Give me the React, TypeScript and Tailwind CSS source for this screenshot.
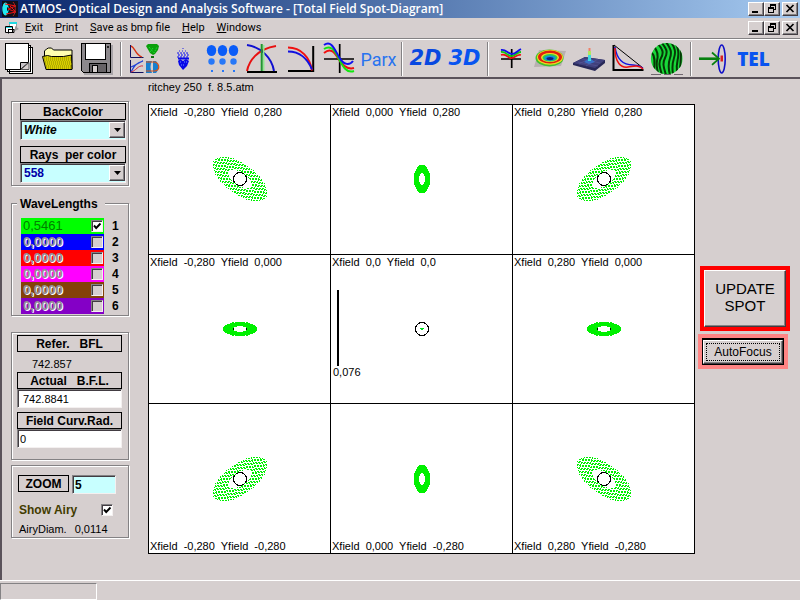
import React from 'react';

const sunken =
  'border border-t-[#848284] border-l-[#848284] border-r-[#f4f0f0] border-b-[#f4f0f0] shadow-[inset_1px_1px_0_#423c42]';
const raised =
  'bg-[#d6cfcf] border border-t-white border-l-white border-r-[#423c42] border-b-[#423c42] shadow-[inset_-1px_-1px_0_#848284]';
const panel = 'border border-[#848284] shadow-[1px_1px_0_#fff,inset_1px_1px_0_#fff]';
const caption =
  'flex items-center justify-center h-[17px] border border-black text-[12px] leading-[14px] font-bold whitespace-pre';

/* ---------- window chrome ---------- */

const WindowButtons: React.FC<{ target: string }> = ({ target }) => (
  <div className="flex">
    <button type="button" aria-label={`Minimize ${target}`} className={`w-4 h-[14px] ${raised}`}>
      <svg viewBox="0 0 14 12" className="w-[14px] h-3" shapeRendering="crispEdges">
        <path d="M3 8h6v2h-6z" />
      </svg>
    </button>
    <button type="button" aria-label={`Restore ${target}`} className={`w-4 h-[14px] ${raised}`}>
      <svg viewBox="0 0 14 12" className="w-[14px] h-3" shapeRendering="crispEdges">
        <path d="M5 1h6v2h-6zM5 3h1v2h-1zM10 3h1v4h-1zM9 6h1v1h-1zM3 4h6v2h-6zM3 6h1v4h-1zM8 6h1v4h-1zM3 9h6v1h-6z" />
      </svg>
    </button>
    <button type="button" aria-label={`Close ${target}`} className={`w-4 h-[14px] ml-[2px] ${raised}`}>
      <svg viewBox="0 0 14 12" className="w-[14px] h-3">
        <path d="M3.5 2l7 7M10.5 2l-7 7" stroke="#000" strokeWidth="1.7" />
      </svg>
    </button>
  </div>
);

const TitleBar = () => (
  <header className="flex items-center h-[18px] pl-[2px] pr-[2px] bg-linear-to-r from-[#0a246a] to-[#a6caf0]">
    <svg viewBox="0 0 16 16" className="w-4 h-4 bg-[#101018]">
      <ellipse cx="3.5" cy="8" rx="3.2" ry="6.5" fill="#20e8f0" />
      <path d="M5 6l3 2-3 2z" fill="#101018" />
      <path d="M3 3l11 2-8 3 8 3-10 2M8 5l6 6" fill="none" stroke="#f01010" />
      <path d="M11 1c3 3 3 11 0 14" fill="none" stroke="#b02020" />
    </svg>
    <h1 className="flex-1 pl-[2px] font-['Open_Sans'] text-[12px] leading-[18px] font-semibold text-white whitespace-nowrap">
      ATMOS- Optical Design and Analysis Software - [Total Field Spot-Diagram]
    </h1>
    <WindowButtons target="application" />
  </header>
);

const MenuBar = () => (
  <nav className="flex items-center h-[21px] pl-[5px] pr-[2px] border-b border-[#848284]">
    <svg viewBox="0 0 15 14" className="w-[15px] h-[14px] mr-[5px]">
      <path d="M4.5 1.5h7v7h-7z" fill="#fff" stroke="#9a9a9a" />
      <path d="M4 1h8v2h-8z" fill="#20d8e0" />
      <path d="M10 5l4 3-4 2z" fill="#9a9a9a" />
      <path d="M.5 5.500h7v6h-7z" fill="#fff" stroke="#000" />
      <path d="M1 6h6v1h-6z" fill="#20d8e0" />
      <path d="M3.5 8v4.500M3 8.500h6v3h-5" fill="none" stroke="#000" />
    </svg>
    <ul className="flex flex-1 gap-3 font-['Roboto'] text-[11px] leading-[18px]">
      <li><button type="button"><u>E</u>xit</button></li>
      <li><button type="button"><u>P</u>rint</button></li>
      <li><button type="button"><u>S</u>ave as bmp file</button></li>
      <li><button type="button"><u>H</u>elp</button></li>
      <li><button type="button"><u>W</u>indows</button></li>
    </ul>
    <WindowButtons target="document" />
  </nav>
);

/* ---------- toolbar ---------- */

const Tool: React.FC<{ label: string; children: React.ReactNode }> = ({ label, children }) => (
  <button type="button" aria-label={label} className="w-[39px] h-9 shrink-0">
    <svg viewBox="0 0 39 36" className="w-[39px] h-9" fill="none">
      {children}
    </svg>
  </button>
);

const TextTool: React.FC<{ className: string; children: React.ReactNode }> = ({ className, children }) => (
  <button type="button" className={`flex items-center justify-center w-[39px] h-9 shrink-0 ${className}`}>
    {children}
  </button>
);

const Separator = () => (
  <div className="w-2 shrink-0 flex justify-center">
    <div className="w-[2px] h-[34px] bg-[#848284] border-r border-white" />
  </div>
);

const Toolbar = () => (
  <div className="flex items-center h-10 pt-px border-t border-t-white border-b-2 border-b-[#5a525a]">
    <Tool label="New">
      <g fill="#fff" stroke="#000" shapeRendering="crispEdges">
        <path d="M9.5 6.500h23v26h-23zM7.5 4.500h23v26h-23z" />
        <path d="M5.5 2.500h23v26h-23z" />
      </g>
      <path d="M20.5 28.500v-7h8z" fill="#c8c4c8" stroke="#000" />
      <path d="M21 28.500l8-7v7z" fill="#d6cfcf" stroke="#555" />
    </Tool>
    <Tool label="Open">
      <path d="M5.5 16v-6l2-2 2-1h3l2 2h18.500v19z" fill="#ffffb0" stroke="#000" />
      <path d="M3.5 15.500l5-1 4 1h12l8-1.500.5 14.500h-26z" fill="#d8d000" stroke="#000" />
      <path d="M5 17h27M5 19h27M6 21h26M6 23h27M7 25h26M7 27h26" stroke="#8c8800" strokeDasharray="1 1" />
    </Tool>
    <Tool label="Save">
      <g shapeRendering="crispEdges">
        <path d="M5 4h30v30h-29z" fill="#a8a4a8" />
        <path d="M3.5 2.500h29v29h-27l-2-2z" fill="#8c888c" stroke="#000" />
        <path d="M7.5 2.500h20v16h-20z" fill="#fff" stroke="#000" />
        <path d="M11.5 22.500h17v9h-17z" fill="#666266" stroke="#000" />
        <path d="M14 24h5v7h-5z" fill="#d6cfcf" stroke="#000" />
        <path d="M29 5h2v2h-2z" fill="#222" />
      </g>
    </Tool>
    <Separator />
    <Tool label="Analysis summary">
      <path d="M5.5 4v12.500h13M5.5 19v12.500h13" stroke="#101060" />
      <path d="M6 5c4 1 4 9 11 11" stroke="#d83010" strokeWidth="1.3" />
      <path d="M23 3h9l2 2-1 4-3 4-2 1-3-2-4-7z" fill="#0aa00a" />
      <path d="M24 6l5 6 3-6M25 11l3-4" stroke="#20e840" strokeDasharray="1 1" />
      <path d="M26 16h3" stroke="#107010" strokeWidth="2" />
      <path d="M6 31c3-6 5-9 12-11M6 26c5-2 7-4 12-6" stroke="#2040d8" strokeWidth="1.2" />
      <path d="M6 31c5-1 7-7 12-6" stroke="#d03040" />
      <path d="M21 20h6c-2 4-2 8 0 12h-6zM28 20h3c3 3 3 9 0 12h-3z" fill="#1880d0" />
      <path d="M21 21h9c5 2 5 8 0 9h-9" stroke="#e05010" strokeWidth="1.2" />
    </Tool>
    <Tool label="Spot diagram">
      <path d="M14 20l2-2 3 2 3-2 3 2-2 5-4 4-4-5z" fill="#0808e8" />
      <path d="M19 7v2M15 10h9" stroke="#2020e8" strokeDasharray="1 2" />
      <path d="M13 12h12M14 14h11M13 16h12" stroke="#1818e8" strokeDasharray="2 1" />
      <path d="M14 13h11M14 15h11" stroke="#4848f0" strokeDasharray="1 2" />
      <path d="M14 17.500h11" stroke="#0808e8" strokeWidth="2" />
      <path d="M16 21h2m2 0h3M17 24h4" stroke="#6c90ff" strokeDasharray="1 1" />
    </Tool>
    <Tool label="Total field spot diagram">
      <g fill="#0a5cf8">
        <ellipse cx="8.5" cy="9.5" rx="4.7" ry="5.5" />
        <ellipse cx="19.5" cy="9.5" rx="4.7" ry="5.5" />
        <ellipse cx="30.5" cy="9.5" rx="4.7" ry="5.5" />
      </g>
      <g fill="#2878f8">
        <circle cx="8.5" cy="20.5" r="3.2" />
        <circle cx="19.5" cy="20.5" r="3.2" />
        <circle cx="30.5" cy="20.5" r="3.2" />
        <path d="M8 29h2v2h-2zM19 29h2v2h-2zM30 29h2v2h-2z" />
      </g>
    </Tool>
    <Tool label="Field curves">
      <path d="M5 31h30" stroke="#000" strokeWidth="2" />
      <path d="M5 30c2-10 10-22 29-25" stroke="#e81010" strokeWidth="2" />
      <path d="M5 4c14 2 25 13 27 26" stroke="#1010d0" strokeWidth="2" />
      <path d="M21.7 4v26" stroke="#90e890" strokeWidth="1.5" />
      <path d="M19.7 3v27" stroke="#209830" strokeWidth="2" />
    </Tool>
    <Tool label="Distortion">
      <path d="M7 30h25.500M32.2 5v26" stroke="#000" strokeWidth="2" />
      <path d="M7 6.500c13 0 22 10 24 23" stroke="#f01010" strokeWidth="2" />
      <path d="M7 10.500c12 0 20 8 24 18" stroke="#1010e0" strokeWidth="2" />
    </Tool>
    <Tool label="Ray fans">
      <path d="M19.7 3v29M4 18h30" stroke="#000" strokeWidth="1.7" />
      <path d="M4 12c6-5 10-2 14 5s9 12 16 10" stroke="#f01010" strokeWidth="2" />
      <path d="M4 8c6-4 10 0 14 8s8 17 16 14" stroke="#10e810" strokeWidth="2" />
      <path d="M4 4c7-5 10 3 15 12s11 8 14 4" stroke="#1010f0" strokeWidth="2" />
    </Tool>
    <TextTool className="font-['Roboto'] text-[18px] text-[#2874f0]">Parx</TextTool>
    <Separator />
    <TextTool className="font-['DejaVu_Sans'] text-[21px] font-bold italic text-[#0848e0]">2D</TextTool>
    <TextTool className="font-['DejaVu_Sans'] text-[21px] font-bold italic text-[#0854f0]">3D</TextTool>
    <Separator />
    <Tool label="Wavefront section">
      <path d="M19.7 8v19M9 18h20" stroke="#000" strokeWidth="1.7" />
      <path d="M9 14c6-2 7 4 11 3s5-4 9-3" stroke="#f01010" strokeWidth="1.8" />
      <path d="M9 11c5-1 7 5 11 4s5-4 9-4" stroke="#10c810" strokeWidth="1.8" />
      <path d="M9 9c5-1 7 4 11 4s5-3 9-5" stroke="#1010e8" strokeWidth="1.8" />
    </Tool>
    <Tool label="Wavefront map">
      <path d="M8 9l27 1-5 15-27 1z" fill="#b8b0b0" />
      <ellipse cx="18.5" cy="17" rx="14" ry="8.5" fill="#40c030" />
      <ellipse cx="19" cy="16.3" rx="13" ry="7.5" fill="#f0d820" />
      <ellipse cx="19" cy="16" rx="12" ry="6.5" fill="#e02010" />
      <ellipse cx="19" cy="16.5" rx="9" ry="4.6" fill="#f0e020" />
      <ellipse cx="19" cy="16.8" rx="7.5" ry="3.8" fill="#30c850" />
      <ellipse cx="19" cy="17.2" rx="5.5" ry="2.6" fill="#1090e0" />
      <ellipse cx="19" cy="17.6" rx="3.5" ry="1.6" fill="#102080" />
    </Tool>
    <Tool label="Point spread function">
      <path d="M3 22l12-6 20 3v3l-10 8-22-6z" fill="#282858" />
      <path d="M3 22l12-6 20 3-10 8z" fill="#40407c" />
      <path d="M8 21l20 4M12 18l18 4M9 23l11-6M16 25l12-7" stroke="#585898" strokeWidth=".6" />
      <path d="M14 21l4-3h3l4 3-6 2z" fill="#3870c8" />
      <path d="M18 12h3v8h-3z" fill="#40d8e0" />
      <path d="M18 10h3v4h-3z" fill="#b0e860" />
      <path d="M18.5 7h2v3h-2z" fill="#f08068" />
    </Tool>
    <Tool label="MTF">
      <path d="M4.5 4v25h30" stroke="#000" strokeWidth="2" />
      <path d="M5 4l29 23" stroke="#000" />
      <path d="M6 6c2 14 9 18 18 18 4 0 7 1 10 3" stroke="#1010e0" strokeWidth="1.5" />
      <path d="M6 7c0 15 6 20 13 19 7-1 12-2 15 2" stroke="#f01010" strokeWidth="1.5" />
    </Tool>
    <Tool label="Interferogram">
      <clipPath id="fringes">
        <circle cx="18.7" cy="17.7" r="15.8" />
      </clipPath>
      <g clipPath="url(#fringes)">
        <path d="M0 0h39v36h-39z" fill="#18d838" />
        <g stroke="#063806" strokeWidth="2">
          <path d="M4 12c3 3 3 8 2 18" />
          <path d="M6 6c5 5 4 10 3 14s0 8 1 12" />
          <path d="M9 2c6 6 7 10 4 15s-1 10 1 17" />
          <path d="M13 1c6 7 7 10 4 16s-1 10 1 17" />
          <path d="M18 1c5 7 6 10 4 16s-2 10 0 17" />
          <path d="M23 1c4 6 5 10 3 16s-2 10-1 16" />
          <path d="M28 3c3 6 3 9 2 14s-2 8-1 14" />
          <path d="M33 7c0 8 0 14-1 20" />
        </g>
      </g>
      <path d="M3 33.500h10M16 33.500h7M26 33.500h9" stroke="#706870" />
    </Tool>
    <Separator />
    <Tool label="Image simulation">
      <ellipse cx="26.7" cy="18" rx="3.5" ry="14" stroke="#1010c8" strokeWidth="1.6" />
      <path d="M4 17.700h19" stroke="#088010" strokeWidth="2.6" />
      <path d="M17 11.500l7 6.200-7 6.200" stroke="#088010" strokeWidth="1.8" />
      <path d="M25.5 14.500h2.500v6h-2.500z" fill="#d82020" />
    </Tool>
    <TextTool className="font-['Open_Sans'] text-[19px] font-extrabold text-[#0854f0]">TEL</TextTool>
  </div>
);

/* ---------- settings column ---------- */

const Combo: React.FC<{ id: string; options: string[]; className: string }> = ({ id, options, className }) => (
  <div className={`relative h-5 bg-[#c8ffff] ${sunken}`}>
    <select
      id={id}
      className={`block appearance-none w-full h-[18px] pl-[3px] outline-none text-[12px] leading-[14px] font-bold ${className}`}
    >
      {options.map((o) => (
        <option key={o}>{o}</option>
      ))}
    </select>
    <span className={`absolute right-0 top-px w-4 h-4 flex items-center justify-center pointer-events-none ${raised}`}>
      <svg viewBox="0 0 7 4" className="w-[7px] h-1">
        <path d="M0 0h7L3.5 4z" />
      </svg>
    </span>
  </div>
);

const Check: React.FC<{ id?: string; label?: string; checked?: boolean }> = ({ id, label, checked = false }) => (
  <span className="relative w-3 h-3 shrink-0">
    <input
      type="checkbox"
      id={id}
      aria-label={label}
      defaultChecked={checked}
      className={`peer block appearance-none w-3 h-3 bg-[#d6cfcf] checked:bg-white ${sunken}`}
    />
    <svg viewBox="0 0 12 12" className="hidden peer-checked:block absolute inset-0 w-3 h-3 pointer-events-none">
      <path d="M3 5.500l2.200 2.500 4.300-4.500" fill="none" stroke="#000" strokeWidth="1.9" />
    </svg>
  </span>
);

const waves = [
  { value: '0,5461', color: 'bg-[#00ff00]', on: true },
  { value: '0,0000', color: 'bg-[#0000ff]', on: false },
  { value: '0,0000', color: 'bg-[#ff0000]', on: false },
  { value: '0,0000', color: 'bg-[#ff00ff]', on: false },
  { value: '0,0000', color: 'bg-[#844108]', on: false },
  { value: '0,0000', color: 'bg-[#8400c6]', on: false },
];

const Settings = () => (
  <form className="w-[118px] shrink-0 flex flex-col pt-[22px]">
    <div className={`pl-2 pr-[2px] pt-px pb-[2px] ${panel}`}>
      <label htmlFor="back" className={caption}>BackColor</label>
      <Combo id="back" options={['White', 'Black']} className="italic text-black" />
      <label htmlFor="rays" className={`mt-[6px] ${caption}`}>Rays  per color</label>
      <Combo id="rays" options={['558', '1200']} className="text-[#0000a8]" />
    </div>

    <div className={`mt-[17px] pl-[9px] pr-[9px] pb-px ${panel}`}>
      <h2 className="relative -top-2 -ml-1 w-[88px] h-[14px] pl-[3px] bg-[#d6cfcf] text-[12px] leading-[16px] font-bold">
        WaveLengths
      </h2>
      {waves.map((w, i) => (
        <div key={i} className="flex items-center h-4">
          <div className={`flex items-center w-[83px] h-4 pl-[2px] pr-px ${w.color}`}>
            <input
              type="text"
              aria-label={`Wavelength ${i + 1}`}
              defaultValue={w.value}
              className={`w-[68px] h-4 outline-none text-[13px] ${w.on ? 'text-[#008000]' : 'font-bold text-[#948c94] [text-shadow:1px_1px_0_#fff]'}`}
            />
            <Check label={`Use wavelength ${i + 1}`} checked={w.on} />
          </div>
          <span className="pl-2 text-[12px] font-bold">{i + 1}</span>
        </div>
      ))}
    </div>

    <div className={`mt-4 pl-[5px] pr-[6px] pt-[2px] pb-[11px] ${panel}`}>
      <div className={caption}>Refer.   BFL</div>
      <p className="h-5 pt-[5px] pl-[15px] text-[11px] leading-[14px]">742.857</p>
      <label htmlFor="bfl" className={caption}>Actual   B.F.L.</label>
      <input id="bfl" type="text" defaultValue="742.8841" className={`block w-full h-[19px] pl-[5px] bg-white text-[11px] outline-none ${sunken}`} />
      <label htmlFor="curv" className={`mt-[4px] ${caption}`}>Field Curv.Rad.</label>
      <input id="curv" type="text" defaultValue="0" className={`block w-full h-[19px] pl-[2px] bg-white text-[11px] outline-none ${sunken}`} />
    </div>

    <div className={`mt-[5px] pl-[6px] pr-3 pt-[9px] pb-px ${panel}`}>
      <div className="flex items-start gap-[3px]">
        <label htmlFor="zoom" className={`w-[51px] ${caption}`}>ZOOM</label>
        <input id="zoom" type="text" defaultValue="5" className={`w-[44px] h-[19px] pl-[2px] bg-[#c8ffff] text-[12px] font-bold outline-none ${sunken}`} />
      </div>
      <div className="flex items-center justify-between h-[14px] mt-[9px] pr-[3px] pl-px">
        <label htmlFor="airy" className="text-[12px] leading-[14px] font-bold text-[#423c00]">Show Airy</label>
        <Check id="airy" checked />
      </div>
      <p className="flex gap-2 mt-[5px] pl-px text-[11px] leading-[14px]">
        <span>AiryDiam.</span>
        <span>0,0114</span>
      </p>
    </div>
  </form>
);

/* ---------- spot diagram ---------- */

type Spot = { a: number; b: number; angle: number };

// Hexagonal pupil grid with a central obstruction, stretched to the blur ellipse.
const tracePath = ({ a, b, angle }: Spot) => {
  const t = (angle * Math.PI) / 180;
  const step = 0.073;
  let d = '';
  for (let j = -16; j <= 16; j++) {
    for (let i = -15; i <= 15; i++) {
      const u = (i + (j % 2 ? 0.5 : 0)) * step;
      const v = j * step * 0.866;
      const r = Math.hypot(u, v);
      if (r > 1 || r < 0.42) continue;
      const x = Math.round(35.5 + a * u * Math.cos(t) - b * v * Math.sin(t));
      const y = Math.round(35.5 + a * u * Math.sin(t) + b * v * Math.cos(t));
      d += `M${x} ${y}h1v1h-1z`;
    }
  }
  return d;
};

const fields: { x: string; y: string; spot?: Spot }[] = [
  { x: '-0,280', y: '0,280', spot: { a: 32, b: 15, angle: 36 } },
  { x: '0,000', y: '0,280', spot: { a: 8, b: 14, angle: 0 } },
  { x: '0,280', y: '0,280', spot: { a: 32, b: 15, angle: -36 } },
  { x: '-0,280', y: '0,000', spot: { a: 17, b: 7, angle: 0 } },
  { x: '0,0', y: '0,0' },
  { x: '0,280', y: '0,000', spot: { a: 17, b: 7, angle: 0 } },
  { x: '-0,280', y: '-0,280', spot: { a: 32, b: 15, angle: -36 } },
  { x: '0,000', y: '-0,280', spot: { a: 8, b: 14, angle: 0 } },
  { x: '0,280', y: '-0,280', spot: { a: 32, b: 15, angle: 36 } },
];

const Diagram = () => (
  <section className="flex-1 min-w-0 flex flex-col ml-[19px] mb-[26px]">
    <p className="h-[25px] pt-px text-[11px] leading-[14px] whitespace-pre">ritchey 250  f. 8.5.atm</p>
    <div className="flex-1 grid grid-cols-3 grid-rows-3 gap-px p-px bg-black">
      {fields.map((f, i) => (
        <div key={i} className="grid bg-white">
          <span className={`col-start-1 row-start-1 pl-[1px] text-[11px] leading-[14px] whitespace-pre ${i > 5 ? 'self-end' : 'self-start'}`}>
            {`Xfield  ${f.x}  Yfield  ${f.y}`}
          </span>
          <svg viewBox="0 0 72 72" className="col-start-1 row-start-1 place-self-center w-[72px] h-[72px]" shapeRendering="crispEdges">
            <circle cx="36" cy="36" r="6.5" fill="none" stroke="#000" />
            {f.spot ? <path d={tracePath(f.spot)} fill="#00f000" /> : <path d="M34 35h4v1h-4zM35 36h2v1h-2z" fill="#00e020" />}
          </svg>
          {i === 4 && (
            <div className="col-start-1 row-start-1 self-end pl-[2px] pb-6">
              <div className="w-[2px] h-[76px] ml-1 bg-black" />
              <span className="block text-[11px] leading-[13px]">0,076</span>
            </div>
          )}
        </div>
      ))}
    </div>
  </section>
);

const App: React.FC = () => {
  return (
    <div className="min-h-screen flex flex-col bg-[#d6cfcf] text-black font-['Liberation_Sans',sans-serif]">
      <TitleBar />
      <MenuBar />
      <Toolbar />
      <main className="flex-1 flex pl-[9px] pr-[10px] border-l-2 border-[#5a525a]">
        <Settings />
        <Diagram />
        <aside className="w-[90px] shrink-0 ml-[5px] pt-[187px]">
          <div className="p-1 bg-[#ff0000]">
            <button type="button" className={`w-full h-[57px] pb-1 text-[15px] leading-[17px] ${raised}`}>
              UPDATE
              <br />
              SPOT
            </button>
          </div>
          <div className="mt-[3px] -ml-[2px] mr-[2px] p-1 bg-[#ff8484]">
            <div className="p-px bg-black">
              <button type="button" className={`w-full h-6 p-[2px] text-[12px] leading-[14px] ${raised}`}>
                <span className="flex items-center justify-center h-full border border-dotted border-black">AutoFocus</span>
              </button>
            </div>
          </div>
        </aside>
      </main>
      <footer className="h-5 pt-[2px] border-t border-white">
        <div className="w-[97px] h-[17px] border border-t-[#848284] border-l-[#848284] border-r-white border-b-white" />
      </footer>
    </div>
  );
};

export default App;
